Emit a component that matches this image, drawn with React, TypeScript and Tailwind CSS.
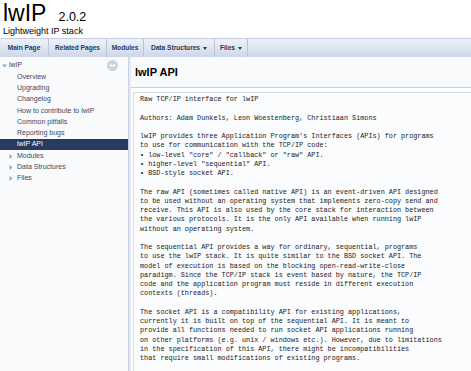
import { ReactNode } from "react";

const tabs = [
  { label: "Main Page", w: "w-[49px]", menu: false },
  { label: "Related Pages", w: "w-[58px]", menu: false },
  { label: "Modules", w: "w-[37px]", menu: false },
  { label: "Data Structures", w: "w-[71px]", menu: true },
  { label: "Files", w: "w-[33px]", menu: true },
];

const pages = [
  "Overview",
  "Upgrading",
  "Changelog",
  "How to contribute to lwIP",
  "Common pitfalls",
  "Reporting bugs",
];

const collapsed = ["Modules", "Data Structures", "Files"];

const body = `Raw TCP/IP interface for lwIP

Authors: Adam Dunkels, Leon Woestenberg, Christiaan Simons

lwIP provides three Application Program's Interfaces (APIs) for programs
to use for communication with the TCP/IP code:
• low-level "core" / "callback" or "raw" API.
• higher-level "sequential" API.
• BSD-style socket API.

The raw API (sometimes called native API) is an event-driven API designed
to be used without an operating system that implements zero-copy send and
receive. This API is also used by the core stack for interaction between
the various protocols. It is the only API available when running lwIP
without an operating system.

The sequential API provides a way for ordinary, sequential, programs
to use the lwIP stack. It is quite similar to the BSD socket API. The
model of execution is based on the blocking open-read-write-close
paradigm. Since the TCP/IP stack is event based by nature, the TCP/IP
code and the application program must reside in different execution
contexts (threads).

The socket API is a compatibility API for existing applications,
currently it is built on top of the sequential API. It is meant to
provide all functions needed to run socket API applications running
on other platforms (e.g. unix / windows etc.). However, due to limitations
in the specification of this API, there might be incompatibilities
that require small modifications of existing programs.`;

function Caret({ down }: { down?: boolean }) {
  return down ? (
    <svg width="5" height="4" viewBox="0 0 5 4" className="shrink-0">
      <path d="M0 0.5h5L2.5 3.5z" fill="#9aa6c2" />
    </svg>
  ) : (
    <svg width="4" height="5" viewBox="0 0 4 5" className="shrink-0">
      <path d="M0.5 0v5L3.5 2.5z" fill="#9aa6c2" />
    </svg>
  );
}

function Row({ indent, children, selected }: { indent: string; children: ReactNode; selected?: boolean }) {
  return (
    <div
      className={`h-[11.3px] flex items-center ${indent} ${
        selected ? "bg-[#283a5d] text-white" : "text-[#3c4863]"
      }`}
    >
      {children}
    </div>
  );
}

export default function App() {
  return (
    <div className="w-[471px] h-[371px] overflow-hidden bg-white flex flex-col font-['Liberation_Sans',Arial,sans-serif]">
      {/* Title area */}
      <div className="h-[38px] shrink-0 pl-[3px] text-black">
        <div className="flex items-baseline h-[26px] pt-[1px]">
          <span className="text-[23px] leading-[24px]">lwIP</span>
          <span className="text-[12.5px] leading-[14px] ml-[12px]">2.0.2</span>
        </div>
        <div className="text-[9px] leading-[11px]">Lightweight IP stack</div>
      </div>

      {/* Tabs */}
      <div className="h-[19px] shrink-0 flex border-t border-[#c3cde3] bg-gradient-to-b from-[#eef1f8] via-[#dfe5f1] to-[#cdd6e9]">
        {tabs.map((t) => (
          <div
            key={t.label}
            className={`${t.w} shrink-0 flex items-center justify-center gap-[3px] border-r border-[#b9c5dd] text-[6.6px] font-bold text-[#283a5d]`}
          >
            <span>{t.label}</span>
            {t.menu && (
              <svg width="4" height="3" viewBox="0 0 4 3">
                <path d="M0 0h4L2 3z" fill="#283a5d" />
              </svg>
            )}
          </div>
        ))}
      </div>

      <div className="flex flex-1 min-h-0">
        {/* Nav tree */}
        <div className="w-[128px] shrink-0 bg-[#f9fafc] pt-[3px] text-[7px] relative">
          <Row indent="pl-[2px]">
            <Caret down />
            <span className="ml-[2px]">lwIP</span>
          </Row>
          {pages.map((p) => (
            <Row key={p} indent="pl-[17px]">
              {p}
            </Row>
          ))}
          <Row indent="pl-[17px]" selected>
            lwIP API
          </Row>
          {collapsed.map((p) => (
            <Row key={p} indent="pl-[9px]">
              <Caret />
              <span className="ml-[4px]">{p}</span>
            </Row>
          ))}
          <svg width="11" height="11" viewBox="0 0 11 11" className="absolute left-[107px] top-[3px]">
            <circle cx="5.5" cy="5.5" r="5.5" fill="#cdd2dd" />
            <path d="M2.2 5.5l2-1.8v3.6zM8.8 5.5l-2-1.8v3.6z" fill="#fff" />
            <rect x="3.5" y="5" width="4" height="1" fill="#fff" />
          </svg>
        </div>

        {/* Split bar */}
        <div className="w-[3px] shrink-0 border-l border-[#c9d2e5] bg-[#e4e9f3]" />

        {/* Content */}
        <div className="flex-1 min-w-0 flex flex-col">
          <div className="h-[31px] shrink-0 bg-[#f9fafc] border-b border-[#c4cfe5] flex items-center pl-[4px]">
            <span className="text-[11px] font-bold text-black">lwIP API</span>
          </div>
          <div className="flex-1 pt-[4px] pl-[2px]">
            <div className="h-full border-l border-t border-[#d6dce8] bg-[#fbfcfd] pl-[6px] pt-[2px]">
              <pre className="font-['Liberation_Mono',monospace] text-[6.8px] leading-[9.25px] text-[#1a1a1a] whitespace-pre">
                {body}
              </pre>
            </div>
          </div>
        </div>
      </div>
    </div>
  );
}
